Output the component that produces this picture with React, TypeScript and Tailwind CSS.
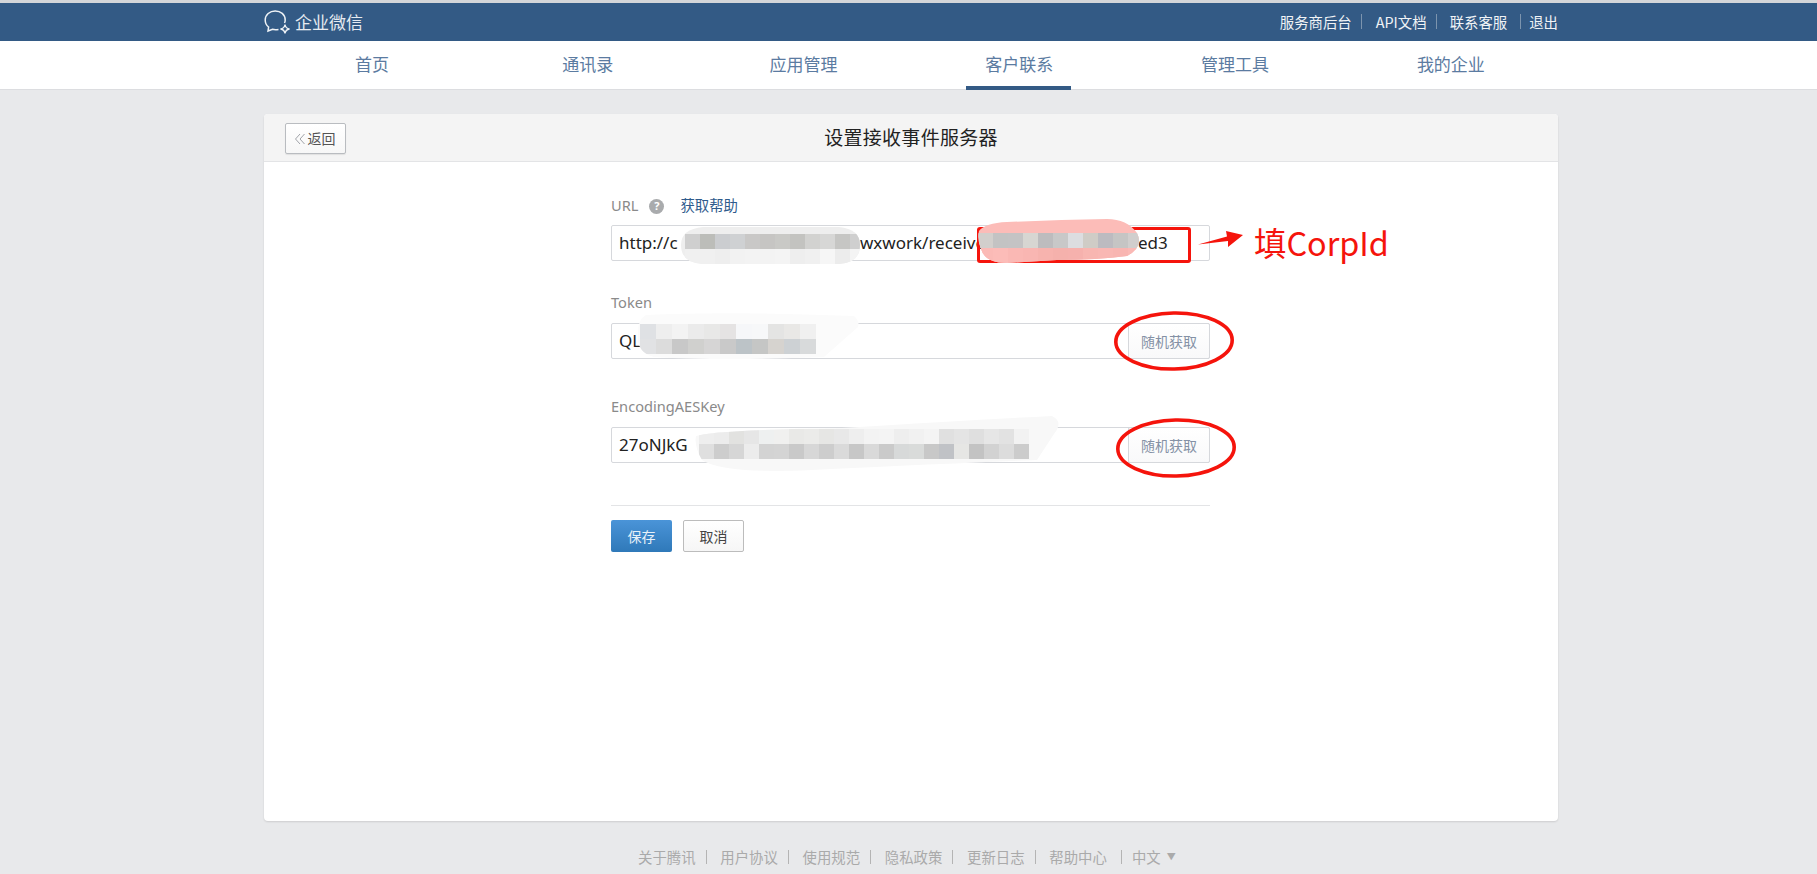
const font = '[font-family:"Noto_Sans_CJK_SC","Liberation_Sans",sans-serif]'
const inputFont = '[font-family:"Noto_Sans","Noto_Sans_CJK_SC",sans-serif]'

const navItems = ["首页", "通讯录", "应用管理", "客户联系", "管理工具", "我的企业"]
const footerLinks = ["关于腾讯", "用户协议", "使用规范", "隐私政策", "更新日志"]

// rows of mosaic cells, each value is a grey used for the redacted text
type MosaicProps = { id: string; className: string; blob: string; rows: string[][]; cell: number; rowH: number; x: number; y: number; w: number; h: number; blobFill: string }

const Mosaic = ({ id, className, blob, rows, cell, rowH, x, y, w, h, blobFill }: MosaicProps) => (
    <svg className={`absolute ${className}`} width={w} height={h} viewBox={`0 0 ${w} ${h}`}>
        <clipPath id={id}>
            <path d={blob} />
        </clipPath>
        <path d={blob} fill={blobFill} />
        <g clipPath={`url(#${id})`}>
            {rows.map((row, r) =>
                row.map((c, i) => <rect key={`${r}-${i}`} x={x + i * cell} y={y + r * rowH} width={cell} height={rowH} fill={c} />)
            )}
        </g>
    </svg>
)

const Ellipse = ({ className }: { className: string }) => (
    <svg className={`absolute ${className}`} width="124" height="64" viewBox="0 0 124 64">
        <ellipse cx="62" cy="32" rx="58.2" ry="28" fill="none" stroke="#f5140c" strokeWidth="3.6" transform="rotate(-1 62 32)" />
    </svg>
)

const RandomButton = () => (
    <div className={`${font} w-[82px] h-[36px] -mr-px shrink-0 flex items-center justify-center border border-[#d6d8dc] rounded-[2px] bg-gradient-to-b from-white to-[#f9f9fa] text-[14px] text-[#8491a5]`}>
        随机获取
    </div>
)

const App = () => {
    return (
        <div className={`h-screen w-full overflow-hidden bg-[#e8e9eb] relative ${font}`}>
            <div className="h-[3px] bg-[#d4d6d9]" />
            <header className="h-[38px] bg-[#335a85] flex justify-between items-center pl-[264px] pr-[259px]">
                <div className="flex items-center gap-[3px] text-white">
                    <svg width="28" height="26" viewBox="0 0 28 26" fill="none" stroke="#eef2f6" strokeWidth="1.5">
                        <path d="M20.5 14 C21 13 21.2 12 21.2 11 C21.2 5.5 16.6 2 11.2 2 C5.8 2 1.2 5.8 1.2 11 C1.2 14 2.6 16.5 4.6 18 L4 22 L8.5 20.3 C10 20.7 12 20.8 14.5 20.4" />
                        <path d="M21 15.5 C21.5 18.5 22.5 19.5 25.5 20 C22.5 20.5 21.5 21.5 21 24.5 C20.5 21.5 19.5 20.5 16.5 20 C19.5 19.5 20.5 18.5 21 15.5 Z" strokeWidth="1.3" />
                    </svg>
                    <span className="text-[17px] text-[#e6ebf1]">企业微信</span>
                </div>
                <nav className="flex items-center text-[14.4px] text-[#f0f3f6]">
                    <span>服务商后台</span>
                    <span className="w-px h-[15px] bg-[#7c94ae] ml-[9px] mr-[14px]" />
                    <span>API文档</span>
                    <span className="w-px h-[15px] bg-[#7c94ae] ml-[9px] mr-[13px]" />
                    <span>联系客服</span>
                    <span className="w-px h-[15px] bg-[#7c94ae] ml-[13px] mr-[8px]" />
                    <span>退出</span>
                </nav>
            </header>

            <div className="h-[49px] bg-white border-b border-[#dcdde0] pl-[264px]">
                <div className="grid grid-cols-[repeat(6,215.8px)] h-full">
                    {navItems.map((item) => (
                        <div key={item} className="relative flex items-center justify-center pb-[3px] text-[17px] text-[#5b7ba1]">
                            {item}
                            {item === "客户联系" && <span className="absolute bottom-[-1px] left-[55px] w-[105px] h-[4px] bg-[#335a85]" />}
                        </div>
                    ))}
                </div>
            </div>

            <main className="ml-[264px] mt-[24px] w-[1294px] h-[707px] bg-white rounded-[4px] shadow-[0_1px_2px_rgba(0,0,0,0.12)] overflow-hidden">
                <div className="relative h-[48px] bg-[#f4f4f4] border-b border-[#e3e4e6] flex items-center justify-center">
                    <div className="absolute left-[21px] top-[9px] w-[61px] h-[31px] rounded-[2px] border border-[#b9bcc0] bg-gradient-to-b from-white to-[#f7f7f7] shadow-[0_1px_1px_rgba(0,0,0,0.08)] flex items-center justify-center gap-[2px] text-[14px] text-[#555]">
                        <svg width="12" height="12" viewBox="0 0 12 12" fill="none" stroke="#a0a3a8" strokeWidth="1" className="-ml-[2px]">
                            <path d="M6 1 L1.5 6 L6 11 M10.5 1 L6 6 L10.5 11" />
                        </svg>
                        返回
                    </div>
                    <h1 className="text-[19px] font-normal text-[#222] tracking-[0.3px]">设置接收事件服务器</h1>
                </div>

                <form className="ml-[347px] w-[599px] pt-[32px] relative">
                    <div className={`h-[24px] flex items-center text-[14.6px] text-[#8a8a8a] ${inputFont}`}>
                        URL
                        <span className="ml-[11px] w-[15px] h-[15px] rounded-full bg-[#a9abad] text-white text-[11px] font-bold flex items-center justify-center">?</span>
                        <span className="ml-[16px] text-[14.4px] text-[#2f5b8c]">获取帮助</span>
                    </div>
                    <div className={`relative mt-[7px] h-[36px] border border-[#d6d8dc] rounded-[2px] flex items-center pl-[7px] text-[17px] text-[#222] ${inputFont}`}>
                        <span>http://c</span>
                        <span className="absolute left-[248px]">wxwork/receive</span>
                        <span className="absolute left-[526px]">ed3</span>
                        <Mosaic
                            id="url-mosaic"
                            className="left-[69px] top-[1px]"
                            w={179} h={38} x={4} y={7} cell={15} rowH={15} blobFill="#eeeeee"
                            blob="M22 0 H158 Q179 2 179 18 Q179 36 158 37 H22 Q0 36 0 18 Q0 2 22 0 Z"
                            rows={[
                                ["#cfcfcf", "#bcbdb9", "#cbcdd0", "#cfd1d3", "#c9c8c7", "#c6c5c3", "#c9c9c6", "#c3c3c0", "#d2d2d0", "#d7d7d6", "#c6c6c4", "#cfcfcf"],
                                ["#f0f0f0", "#f0f0f0", "#eeeeee", "#f2f2f2", "#f3f3f3", "#f3f3f3", "#f4f4f4", "#eeeeee", "#f0f0f0", "#f6f6f6", "#ececec", "#f4f4f4"],
                            ]}
                        />
                        <div className="absolute left-[365px] top-[1px] w-[214px] h-[36px] rounded-[3px] border-[3px] border-[#f5140c]" />
                        <Mosaic
                            id="corp-mosaic"
                            className="left-[365px] top-[-7px]"
                            w={166} h={45} x={1} y={14} cell={15} rowH={15} blobFill="#fcbcb8"
                            blob="M2 12 Q8 4 30 3 Q80 1 130 0 Q150 0 160 14 Q167 28 150 37 Q120 41 80 41 L30 44 Q8 44 4 30 Q0 20 2 12 Z"
                            rows={[
                                ["#d2cfcc", "#c3c3c3", "#c4c3c4", "#d7d6d2", "#bdbcbe", "#c8c8c8", "#dcdde0", "#cfccc6", "#bcbbc0", "#c5c5c4", "#d0cecd"],
                                ["#fbbab6", "#fcbcb8", "#fab8b4", "#f9b6b2", "#f7b3ae", "#f5b1ac", "#f6b1ad", "#f8b6b1", "#f9b7b3", "#f8b5b1", "#fab9b5"],
                            ]}
                        />
                    </div>

                    <div className={`mt-[30px] h-[24px] flex items-center text-[14.6px] text-[#8a8a8a] ${inputFont}`}>Token</div>
                    <div className={`relative mt-[8px] h-[36px] border border-[#d6d8dc] rounded-[2px] flex items-center justify-between pl-[7px] text-[17px] text-[#222] ${inputFont}`}>
                        <span>QL</span>
                        <RandomButton />
                        <Mosaic
                            id="token-mosaic"
                            className="left-[22px] top-[-11px]"
                            w={226} h={50} x={6} y={11} cell={16} rowH={15} blobFill="#fbfbfb"
                            blob="M12 2 Q90 -2 220 3 Q226 8 224 14 L190 44 Q90 48 20 44 Q2 40 4 20 Q4 6 12 2 Z"
                            rows={[
                                ["#dfe1e4", "#eeeeee", "#f3f3f3", "#ebebeb", "#e8e8e7", "#e5e3e3", "#f6f7f9", "#f7f8f9", "#e4e4e3", "#e9e8e6", "#f0f0f0"],
                                ["#e1e2e4", "#dcdcdc", "#c8c8c8", "#d0d0ce", "#d6d5d5", "#c9c9c9", "#bcc3c7", "#c5c6c5", "#d6d3cf", "#cdd1d4", "#d8dadb"],
                            ]}
                        />
                    </div>

                    <div className={`mt-[36px] h-[24px] flex items-center text-[14.6px] text-[#8a8a8a] ${inputFont}`}>EncodingAESKey</div>
                    <div className={`relative mt-[8px] h-[36px] border border-[#d6d8dc] rounded-[2px] flex items-center justify-between pl-[7px] text-[17px] text-[#222] ${inputFont}`}>
                        <span>27oNJkG</span>
                        <RandomButton />
                        <Mosaic
                            id="aes-mosaic"
                            className="left-[80px] top-[-12px]"
                            w={372} h={60} x={7} y={13} cell={15} rowH={15} blobFill="#f8f8f8"
                            blob="M4 20 Q20 14 150 12 Q280 4 360 0 Q372 6 362 18 L345 44 Q200 50 120 54 Q30 58 10 44 Q2 30 4 20 Z"
                            rows={[
                                ["#eeeeee", "#ececec", "#e2e2e0", "#e6e6e6", "#eef0f0", "#f0f0ef", "#e9e9e7", "#ebebe9", "#e6e6e4", "#e8e8e8", "#eeeeee", "#f3f3f3", "#f4f4f4", "#eeeeee", "#f1f1f1", "#f4f4f4", "#e0e0e0", "#e4e4e4", "#dfdfdf", "#e6e6e6", "#e2e2e2", "#f2f2f2", "#f8f8f8"],
                                ["#dfdfdf", "#cdcdcd", "#d6d6d6", "#ececec", "#d3d3d3", "#d4d4d4", "#c9c9c9", "#d7d7d7", "#cdcdcd", "#dadada", "#c7c7c7", "#d9d9d9", "#cacaca", "#d7d9d9", "#d9dbda", "#c8c8c8", "#c0c2c6", "#e6e6e4", "#c3c3c3", "#d2d2d2", "#dcdcdc", "#cccccc"],
                            ]}
                        />
                    </div>

                    <div className="mt-[42px] h-px bg-[#e3e4e6]" />
                    <div className="mt-[14px] flex gap-[11px] text-[14px]">
                        <div className="w-[61px] h-[32px] rounded-[2px] bg-gradient-to-b from-[#4a94d8] to-[#2f79b9] flex items-center justify-center text-[#e8f1f8]">保存</div>
                        <div className="w-[61px] h-[32px] rounded-[2px] border border-[#bcbcbc] bg-gradient-to-b from-white to-[#f6f6f6] flex items-center justify-center text-[#444]">取消</div>
                    </div>

                    <Ellipse className="left-[501px] top-[147px]" />
                    <Ellipse className="left-[503px] top-[254px]" />
                </form>
            </main>

            <footer className="mt-[26px] ml-[638px] flex items-center text-[14.4px] leading-[20px] text-[#aaaaaa]">
                {footerLinks.map((link) => (
                    <span key={link} className="flex items-center">
                        {link}
                        <span className="w-px h-[14px] bg-[#b4b4b4] ml-[10px] mr-[13.7px]" />
                    </span>
                ))}
                <span>帮助中心</span>
                <span className="w-px h-[14px] bg-[#b4b4b4] ml-[14px] mr-[10px]" />
                <span>中文</span>
                <span className="ml-[6px] text-[9px]">▼</span>
            </footer>

            {/* red arrow and note sit on top of the card */}
            <svg className="absolute left-[1197px] top-[230px]" width="48" height="20" viewBox="0 0 48 20">
                <path d="M1 14.5 L30 6.5 L29 1 L46 5 L31 17 L31 11 Z" fill="#f5140c" />
            </svg>
            <span className="absolute left-[1254px] top-[220px] text-[32.4px] leading-[44px] text-[#f5140c]">填CorpId</span>
        </div>
    )
}

export default App
